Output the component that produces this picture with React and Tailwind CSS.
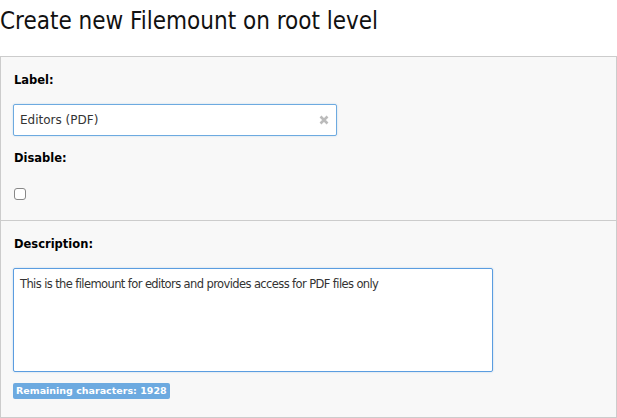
export default function App() {
  return (
    <div className="w-[617px] h-[418px] bg-white overflow-hidden" style={{ fontFamily: '"DejaVu Sans", Verdana, sans-serif' }}>
      <h1 className="h-[56px] pt-[6px] pl-0 text-[24px] leading-[30px] text-[#111]" style={{ fontFamily: '"DejaVu Sans Condensed", "Liberation Sans Narrow", sans-serif' }}>
        Create new Filemount on root level
      </h1>
      <div className="border border-[#cccccc] bg-[#f8f8f8] w-[617px] h-[362px]">
        <div className="px-[12px] pt-[16px] pb-[20px] border-b border-[#cccccc]">
          <div className="text-[11.5px] font-bold text-black leading-[15px] h-[15px] pl-[1px]">Label:</div>
          <div className="mt-[16px] w-[324px] h-[32px] border border-[#6daae0] bg-white rounded-[2px] flex items-center px-[6px] shadow-[0_0_2px_rgba(109,170,224,0.4)]">
            <span className="text-[12px] text-[#333] flex-1">Editors (PDF)</span>
            <svg width="10" height="10" viewBox="0 0 10 10" className="mr-[1px]">
              <path d="M1.5 1.5 L8.5 8.5 M8.5 1.5 L1.5 8.5" stroke="#bbbbbb" strokeWidth="2.6" strokeLinecap="butt" />
            </svg>
          </div>
          <div className="mt-[15px] text-[11.5px] font-bold text-black leading-[15px] h-[15px] pl-[1px]">Disable:</div>
          <div className="mt-[22px] w-[12px] h-[12px] border border-[#888] rounded-[3px] bg-white ml-[1px]" />
        </div>
        <div className="px-[12px] pt-[16px]">
          <div className="text-[11.5px] font-bold text-black leading-[15px] h-[15px] pl-[1px]">Description:</div>
          <div className="mt-[16px] w-[480px] h-[104px] border border-[#5b9de0] bg-white rounded-[2px] px-[6px] pt-[7px] text-[11.5px] tracking-[-0.6px] text-[#333] leading-[16px] shadow-[0_0_2px_rgba(91,157,224,0.4)]">
            This is the filemount for editors and provides access for PDF files only
          </div>
          <div className="mt-[11px] inline-flex h-[16px] items-center px-[3px] bg-[#6daae0] rounded-[2px] text-white text-[9.5px] font-bold">
            Remaining characters: 1928
          </div>
        </div>
      </div>
    </div>
  );
}
